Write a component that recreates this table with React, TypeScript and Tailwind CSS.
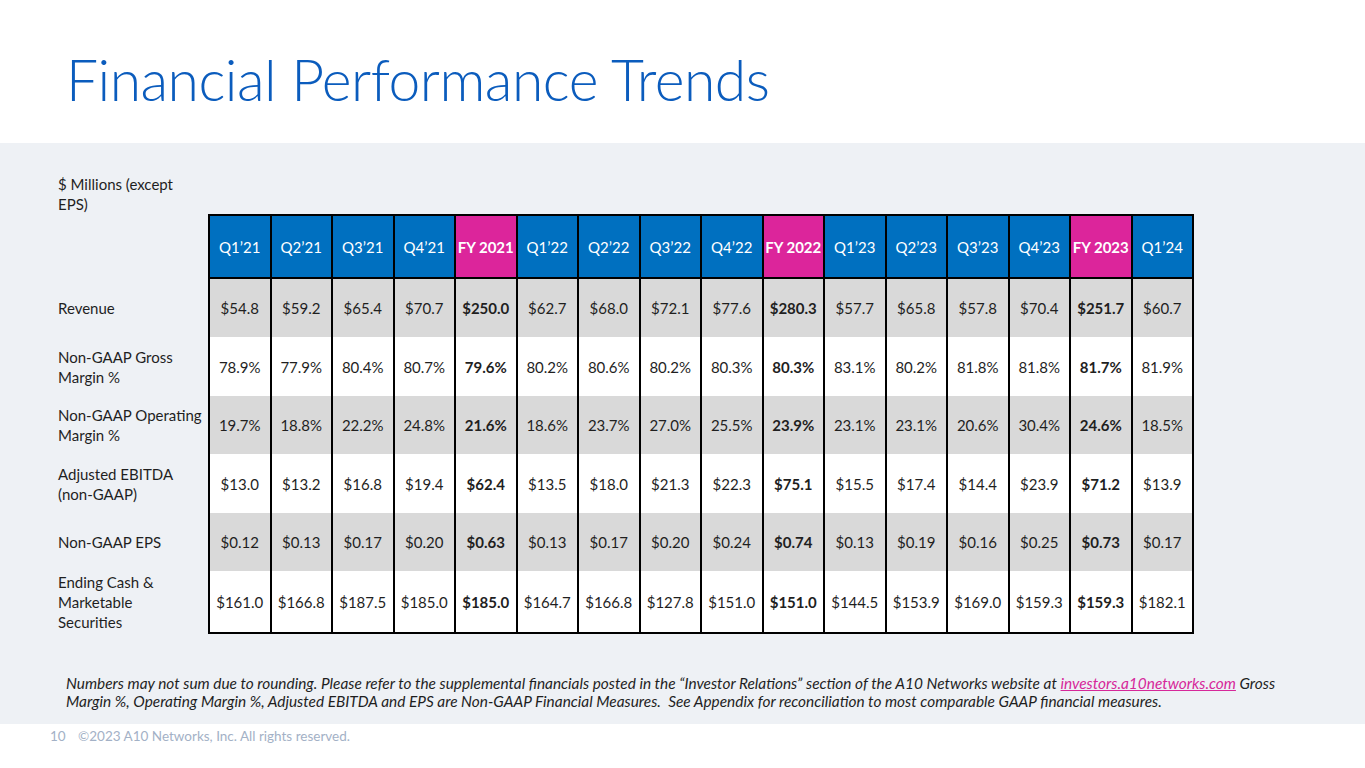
import React from "react";

const cols = [
  "Q1’21", "Q2’21", "Q3’21", "Q4’21", "FY 2021",
  "Q1’22", "Q2’22", "Q3’22", "Q4’22", "FY 2022",
  "Q1’23", "Q2’23", "Q3’23", "Q4’23", "FY 2023", "Q1’24",
];

const rows = [
  {
    label: ["Revenue"],
    h: "h-[59px]",
    gray: true,
    values: ["$54.8", "$59.2", "$65.4", "$70.7", "$250.0", "$62.7", "$68.0", "$72.1", "$77.6", "$280.3", "$57.7", "$65.8", "$57.8", "$70.4", "$251.7", "$60.7"],
  },
  {
    label: ["Non-GAAP Gross", "Margin %"],
    h: "h-[59px]",
    gray: false,
    values: ["78.9%", "77.9%", "80.4%", "80.7%", "79.6%", "80.2%", "80.6%", "80.2%", "80.3%", "80.3%", "83.1%", "80.2%", "81.8%", "81.8%", "81.7%", "81.9%"],
  },
  {
    label: ["Non-GAAP Operating", "Margin %"],
    h: "h-[58px]",
    gray: true,
    values: ["19.7%", "18.8%", "22.2%", "24.8%", "21.6%", "18.6%", "23.7%", "27.0%", "25.5%", "23.9%", "23.1%", "23.1%", "20.6%", "30.4%", "24.6%", "18.5%"],
  },
  {
    label: ["Adjusted EBITDA", "(non-GAAP)"],
    h: "h-[59px]",
    gray: false,
    values: ["$13.0", "$13.2", "$16.8", "$19.4", "$62.4", "$13.5", "$18.0", "$21.3", "$22.3", "$75.1", "$15.5", "$17.4", "$14.4", "$23.9", "$71.2", "$13.9"],
  },
  {
    label: ["Non-GAAP EPS"],
    h: "h-[58px]",
    gray: true,
    values: ["$0.12", "$0.13", "$0.17", "$0.20", "$0.63", "$0.13", "$0.17", "$0.20", "$0.24", "$0.74", "$0.13", "$0.19", "$0.16", "$0.25", "$0.73", "$0.17"],
  },
  {
    label: ["Ending Cash &", "Marketable", "Securities"],
    h: "h-[62px]",
    gray: false,
    values: ["$161.0", "$166.8", "$187.5", "$185.0", "$185.0", "$164.7", "$166.8", "$127.8", "$151.0", "$151.0", "$144.5", "$153.9", "$169.0", "$159.3", "$159.3", "$182.1"],
  },
];

const isFY = (i: number) => i === 4 || i === 9 || i === 14;

export default function App() {
  return (
    <div className="w-[1365px] h-[768px] bg-white font-['Lato',sans-serif] text-[#1f1f1f] overflow-hidden">
      {/* Title */}
      <div className="h-[143px] pl-[66px] pt-[44px]">
        <h1 className="text-[57px] leading-[70px] font-light text-[#0b5cbd] tracking-[-0.5px]">
          Financial Performance Trends
        </h1>
      </div>

      {/* Gray content panel */}
      <div className="h-[581px] bg-[#eef1f5] pt-[31px]">
        <div className="pl-[58px]">
          <div className="w-[135px] text-[15px] leading-[20px]">$ Millions (except EPS)</div>
          <table className="border-collapse table-fixed text-[15px] leading-[20px]">
            <colgroup>
              <col className="w-[151px]" />
              {cols.map((c) => (
                <col key={c} className="w-[61.5px]" />
              ))}
            </colgroup>
            <thead>
              <tr className="h-[63px]">
                <th />
                {cols.map((c, i) => (
                  <th
                    key={c}
                    className={`border-2 border-black text-white text-center px-0 ${
                      isFY(i) ? "bg-[#dc259b] font-bold" : "bg-[#0070c0] font-normal"
                    }`}
                  >
                    {c}
                  </th>
                ))}
              </tr>
            </thead>
            <tbody>
              {rows.map((r, ri) => (
                <tr key={r.label.join(" ")} className={r.h}>
                  <td className="text-left pr-1">
                    {r.label.map((l) => (
                      <div key={l}>{l}</div>
                    ))}
                  </td>
                  {r.values.map((v, i) => (
                    <td
                      key={i}
                      className={`border-x-2 border-black text-center px-0 whitespace-nowrap ${
                        ri === rows.length - 1 ? "border-b-2" : ""
                      } ${r.gray ? "bg-[#d9d9d9]" : "bg-white"} ${isFY(i) ? "font-bold" : ""}`}
                    >
                      {v}
                    </td>
                  ))}
                </tr>
              ))}
            </tbody>
          </table>
        </div>

        <p className="pl-[66px] mt-[40px] italic text-[15.4px] leading-[18px] text-[#1f1f1f] whitespace-nowrap">
          Numbers may not sum due to rounding. Please refer to the supplemental financials posted in the “Investor
          Relations” section of the A10 Networks website at{" "}
          <span className="text-[#d6289a] underline">investors.a10networks.com</span> Gross
          <br />
          Margin %, Operating Margin %, Adjusted EBITDA and EPS are Non-GAAP Financial Measures.&nbsp; See Appendix for
          reconciliation to most comparable GAAP financial measures.
        </p>
      </div>

      {/* Footer */}
      <div className="flex items-center h-[24px] pl-[50px] text-[13.5px] text-[#a3b1c6]">
        <span className="w-[28px]">10</span>
        <span>©2023 A10 Networks, Inc. All rights reserved.</span>
      </div>
    </div>
  );
}
